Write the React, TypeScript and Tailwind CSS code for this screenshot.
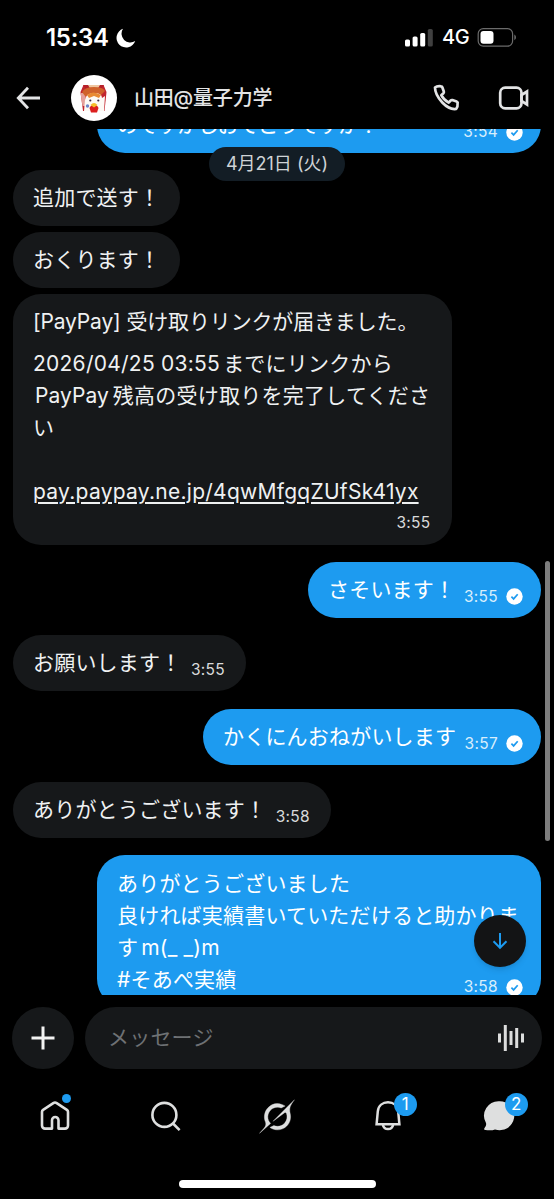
import type { ReactNode } from 'react'
import clsx from 'clsx'

function StatusBar() {
  return (
    <div className="flex h-[67px] shrink-0 items-start justify-between pt-[24px] pr-[37px] pl-[46px] text-white">
      <div className="flex items-center gap-[7px]">
        <span className="w-[63px] text-[24px] leading-[27px] font-semibold tracking-[-0.3px]">15:34</span>
        <svg width="20" height="20" viewBox="0 0 20 20" fill="currentColor">
          <path d="M7 .8A9.600 9.600 0 1 0 19.200 13 8.800 8.800 0 0 1 7 .8z" />
        </svg>
      </div>
      <div className="flex h-[27px] items-center">
        <svg width="28" height="18" viewBox="0 0 28 18" fill="currentColor">
          <rect x="0" y="10.5" width="5" height="7" rx="1.6" />
          <rect x="7.6" y="7.5" width="5" height="10" rx="1.6" />
          <rect x="15.2" y="4" width="5" height="13.5" rx="1.6" />
          <rect x="22.8" y="0" width="5" height="17.5" rx="1.6" opacity="0.25" />
        </svg>
        <span className="ml-[9px] w-[27px] text-[20px] leading-[27px] font-medium tracking-[-0.5px]">4G</span>
        <svg className="ml-[8px]" width="40" height="19" viewBox="0 0 40 19">
          <rect x="1.2" y="0.7" width="34.4" height="17.4" rx="5" fill="none" stroke="#6b6b6b" strokeWidth="1.2" />
          <rect x="3.5" y="3" width="13" height="12.8" rx="3" fill="#fff" />
          <path d="M37.3 6.6c2.2 1 2.2 4.6 0 5.6z" fill="#6b6b6b" />
        </svg>
      </div>
    </div>
  )
}

function Avatar() {
  return (
    <svg width="46" height="46" viewBox="0 0 46 46">
      <circle cx="23" cy="23" r="23" fill="#fff" />
      <path d="M9.500 17l3-7h20l3 7-2 19H12z" fill="#c2262e" />
      <path d="M9.500 18h5v13h-3z" fill="#e5a29c" />
      <path d="M12 10h21l-3 4H15z" fill="#b5202a" />
      <path d="M17 10h12l-3 5h-6z" fill="#efc6a0" />
      <path d="M11 17q3-5 12-5t11 4l-5 5H14z" fill="#d0622b" />
      <path d="M13 36l1-11q1-7 9-7t8 5l3-2-1 15z" fill="#fdfaf5" />
      <path d="M16 20q6-5 14 0l-2 3-5-2-5 2z" fill="#e88a32" />
      <circle cx="19.3" cy="25.5" r="1.100" fill="#3b2a42" />
      <circle cx="27.300" cy="25.500" r="1.100" fill="#3b2a42" />
      <path d="M18.500 33q1-3 4.500-3t4.500 3l-1.500 4.500h-6z" fill="#dc1f1f" />
      <path d="M19.500 30q3.500-4 7 0l-3.500 2.500z" fill="#f6bd27" />
      <circle cx="16.500" cy="31" r="1.700" fill="#6d86c9" />
    </svg>
  )
}

function Header() {
  return (
    <header className="flex h-[62px] shrink-0 items-center pr-[24px] pl-[16px] text-[#e3e4e5]">
      <svg width="26" height="26" viewBox="0 0 26 26" fill="none" stroke="currentColor" strokeWidth="2.800">
        <path d="M24 13H2.500M12 2.800L2.300 13l9.700 10.200" />
      </svg>
      <div className="ml-[29px]">
        <Avatar />
      </div>
      <h1 className="ml-[17px] text-[20px] leading-[28px] font-medium tracking-[-0.2px] whitespace-nowrap">山田@量子力学</h1>
      <svg className="ml-auto" width="28" height="28" viewBox="0 0 28 28" fill="none" stroke="currentColor" strokeWidth="2.700" strokeLinejoin="round">
        <path d="M3 3.600Q5 1.800 9 2.300q1 .1 1.300 1l1.500 4.200q.3 1-.4 1.700L9.300 11.200q2.500 5 7.400 7.400l2-2.100q.7-.7 1.700-.4l4.200 1.500q1 .3 1 1.300.4 4-1.400 6Q17.500 26 10.300 18.500T3 3.600z" />
      </svg>
      <svg className="ml-[38px]" width="32" height="26" viewBox="0 0 32 26" fill="none" stroke="currentColor" strokeWidth="2.700">
        <rect x="2.200" y="2.700" width="21.300" height="20.600" rx="5" />
        <path d="M23.500 10l5.500-3.500v13L23.500 16z" />
      </svg>
    </header>
  )
}

function ReadMark() {
  return (
    <svg width="17" height="17" viewBox="0 0 17 17">
      <circle cx="8.500" cy="8.500" r="8.200" fill="#fff" />
      <path d="M5.400 8.700l2.200 2.200 4.100-4.700" fill="none" stroke="#1d9bf0" strokeWidth="1.700" />
    </svg>
  )
}

function Time({ children, read }: { children: string; read?: boolean }) {
  return (
    <span className={clsx('flex items-center text-[15.500px] leading-[18px] tracking-[0.3px]', read ? 'gap-[8px] text-[#d8eefc]' : 'text-[#d9dadb]')}>
      {children}
      {read && <ReadMark />}
    </span>
  )
}

type BubbleProps = {
  children: ReactNode
  time?: string
  mine?: boolean
  className?: string
}

function Bubble({ children, time, mine, className }: BubbleProps) {
  return (
    <div
      className={clsx(
        'flex h-[56px] shrink-0 items-end rounded-[28px] pb-[12px] pl-[20px] text-[21px] leading-[32px] tracking-[0.2px] whitespace-nowrap',
        mine ? 'self-end bg-[#1d9bf0] pr-[18px] text-white' : 'self-start bg-[#16181a] pr-[21px] text-[#eff1f2]',
        className,
      )}
    >
      <span>{children}</span>
      {time && (
        <span className="ml-auto">
          <Time read={mine}>{time}</Time>
        </span>
      )}
    </div>
  )
}

function Messages() {
  return (
    <main className="relative flex h-[866px] shrink-0 flex-col overflow-hidden pr-[13px] pl-[13px]">
      <Bubble mine time="3:54" className="-mt-[32px] w-[444px]">
        <span className="tracking-[-0.9px]">のですがしおてどうですか？</span>
      </Bubble>

      <Bubble className="mt-[16.500px] w-[167px]">追加で送す！</Bubble>
      <Bubble className="mt-[6px] w-[167px]">おくります！</Bubble>

      <div className="mt-[6px] flex h-[251px] w-[438.500px] shrink-0 flex-col self-start rounded-[28px] bg-[#16181a] px-[20px] pt-[12px] text-[21px] leading-[32px] whitespace-nowrap text-[#eff1f2]">
        <p className="tracking-[-0.150px]">[PayPay] 受け取りリンクが届きました。</p>
        <p className="mt-[10px]">
          <span className="mr-[3px] tracking-[0.250px]">2026/04/25 03:55</span>
          <span className="tracking-[0.250px]">までにリンクから</span>
        </p>
        <p className="pl-[2px]">
          <span className="mr-[4px] tracking-[0.050px]">PayPay</span>
          <span className="tracking-[0.250px]">残高の受け取りを完了してくださ</span>
        </p>
        <p>い</p>
        <a href="#" className="mt-[32px] tracking-[0.270px] underline decoration-[1.500px] underline-offset-[3px]">
          pay.paypay.ne.jp/4qwMfgqZUfSk41yx
        </a>
        <span className="mt-[6px] mr-[1px] self-end">
          <Time>3:55</Time>
        </span>
      </div>

      <Bubble mine time="3:55" className="mt-[17px] w-[233px]">さそいます！</Bubble>
      <Bubble time="3:55" className="mt-[17.500px] w-[233px]">お願いします！</Bubble>
      <Bubble mine time="3:57" className="mt-[17.500px] w-[338px]">かくにんおねがいします</Bubble>
      <Bubble time="3:58" className="mt-[17.500px] w-[318px]">ありがとうございます！</Bubble>

      <div className="mt-[17px] flex h-[152px] w-[444px] shrink-0 flex-col self-end rounded-[28px] bg-[#1d9bf0] pt-[13px] pr-[18px] pl-[20px] text-[21px] leading-[32px] tracking-[0.2px] whitespace-nowrap text-white">
        <p>ありがとうございました</p>
        <p>良ければ実績書いていただけると助かりま</p>
        <p>
          す<span className="ml-[3px]">m(_ _)m</span>
        </p>
        <div className="flex items-end justify-between">
          <p>#そあぺ実績</p>
          <Time read>3:58</Time>
        </div>
      </div>

      <div className="absolute top-[17.500px] left-[209px] flex h-[34px] w-[136px] items-center justify-center rounded-full bg-[#131d25] text-[18px] text-[#cfd3d6]">
        4月21日 (火)
      </div>
      <div className="absolute top-[432px] right-[4px] h-[280px] w-[5px] rounded-full bg-[#7d7d7d]" />
      <button className="absolute right-[28px] bottom-[28px] flex size-[52px] items-center justify-center rounded-full bg-[#131415] shadow-md">
        <svg width="18" height="18" viewBox="0 0 18 18" fill="none" stroke="#1d9bf0" strokeWidth="2">
          <path d="M9 1v14.500M2.500 9.300L9 15.800l6.500-6.500" />
        </svg>
      </button>
    </main>
  )
}

function Composer() {
  return (
    <div className="flex h-[86px] shrink-0 gap-[11px] pt-[12px] pr-[12px] pl-[12px]">
      <button className="flex size-[62px] shrink-0 items-center justify-center rounded-full bg-[#16181a]">
        <svg width="24" height="24" viewBox="0 0 24 24" fill="none" stroke="#f2f2f2" strokeWidth="3">
          <path d="M12 .5v23M.5 12h23" />
        </svg>
      </button>
      <div className="flex h-[62px] grow items-center justify-between rounded-full bg-[#16181a] pr-[17px] pl-[23px]">
        <span className="text-[21px] tracking-[0.2px] text-[#6e7174]">メッセージ</span>
        <svg width="28" height="28" viewBox="0 0 28 28" fill="#dcdddd">
          <rect x="1" y="9.500" width="3" height="9" />
          <rect x="6.800" y="1" width="3" height="26" />
          <rect x="12.500" y="7" width="3" height="14" />
          <rect x="18.200" y="4" width="3" height="20" />
          <rect x="24" y="9.500" width="3" height="9" />
        </svg>
      </div>
    </div>
  )
}

function Badge({ children }: { children: string }) {
  return (
    <span className="absolute -top-[6px] left-[23px] flex size-[23px] items-center justify-center rounded-full bg-[#1d9bf0] text-[17px] leading-none text-white">
      {children}
    </span>
  )
}

function TabBar() {
  return (
    <nav className="grid h-[70px] shrink-0 grid-cols-5 items-center justify-items-center text-[#dedfdf]">
      <div className="relative size-[34px]">
        <svg width="34" height="34" viewBox="0 0 34 34" fill="none" stroke="currentColor" strokeWidth="2.600" strokeLinejoin="round">
          <path d="M14 29.600H7a3 3 0 0 1-3-3V12.800q0-1.300 1.100-2l10.200-6.700q1.700-1.100 3.400 0l10.200 6.700q1.100.7 1.100 2v13.800a3 3 0 0 1-3 3h-6.500v-8.300a3.250 3.250 0 0 0-6.500 0z" />
        </svg>
        <span className="absolute -top-[5px] left-[24px] size-[9px] rounded-full bg-[#1d9bf0]" />
      </div>
      <svg width="34" height="34" viewBox="0 0 34 34" fill="none" stroke="currentColor" strokeWidth="2.600">
        <circle cx="15.400" cy="15.900" r="12" />
        <path d="M24 24.500l6.600 6.600" />
      </svg>
      <svg width="36" height="35" viewBox="0 0 24 24" fill="currentColor" stroke="currentColor" strokeWidth="0.25">
        <path d="M9.270 15.290l7.978-5.897c.391-.29.95-.177 1.137.272.98 2.369.542 5.215-1.410 7.169-1.951 1.954-4.667 2.382-7.149 1.406l-2.711 1.257c3.889 2.661 8.611 2.003 11.562-.953 2.341-2.344 3.066-5.539 2.388-8.420l.006.007c-.983-4.232.242-5.924 2.750-9.383l.179-.248-3.301 3.305v-.01L9.267 15.292M7.623 16.723c-2.792-2.670-2.310-6.801.071-9.184 1.761-1.763 4.647-2.483 7.166-1.425l2.705-1.250a7.808 7.808 0 0 0-1.829-1A8.975 8.975 0 0 0 5.984 5.830c-2.533 2.536-3.330 6.436-1.962 9.764 1.022 2.487-.653 4.246-2.340 6.022-.599.630-1.199 1.259-1.682 1.925l7.620-6.815" />
      </svg>
      <div className="relative size-[34px]">
        <svg width="34" height="34" viewBox="0 0 34 34" fill="none" stroke="currentColor" strokeWidth="2.500">
          <path d="M5.600 25.200L6.800 12.300C7.400 6.500 11.800 3.300 17 3.300s9.600 3.200 10.200 9l1.200 12.900zM11.800 25.700q1 4.300 5.200 4.300t5.200-4.300" />
        </svg>
        <Badge>1</Badge>
      </div>
      <div className="relative size-[34px]">
        <svg width="34" height="34" viewBox="0 0 34 34" fill="currentColor">
          <path d="M17.500 2.200a14.500 14.500 0 1 1-4.500 28.200q-3 1.300-9.500.7c-1.500-.1-1.600-1.300-.8-2.300q2-2.300 1.300-4.800A14.600 14.600 0 0 1 17.500 2.200z" />
        </svg>
        <Badge>2</Badge>
      </div>
    </nav>
  )
}

export default function App() {
  return (
    <div className="flex h-[1199px] w-[554px] flex-col overflow-hidden bg-black font-['Inter','Noto_Sans_CJK_JP',sans-serif]">
      <StatusBar />
      <Header />
      <Messages />
      <Composer />
      <TabBar />
      <div className="mt-[29px] ml-[179px] h-[8px] w-[197px] shrink-0 rounded-full bg-white" />
    </div>
  )
}
